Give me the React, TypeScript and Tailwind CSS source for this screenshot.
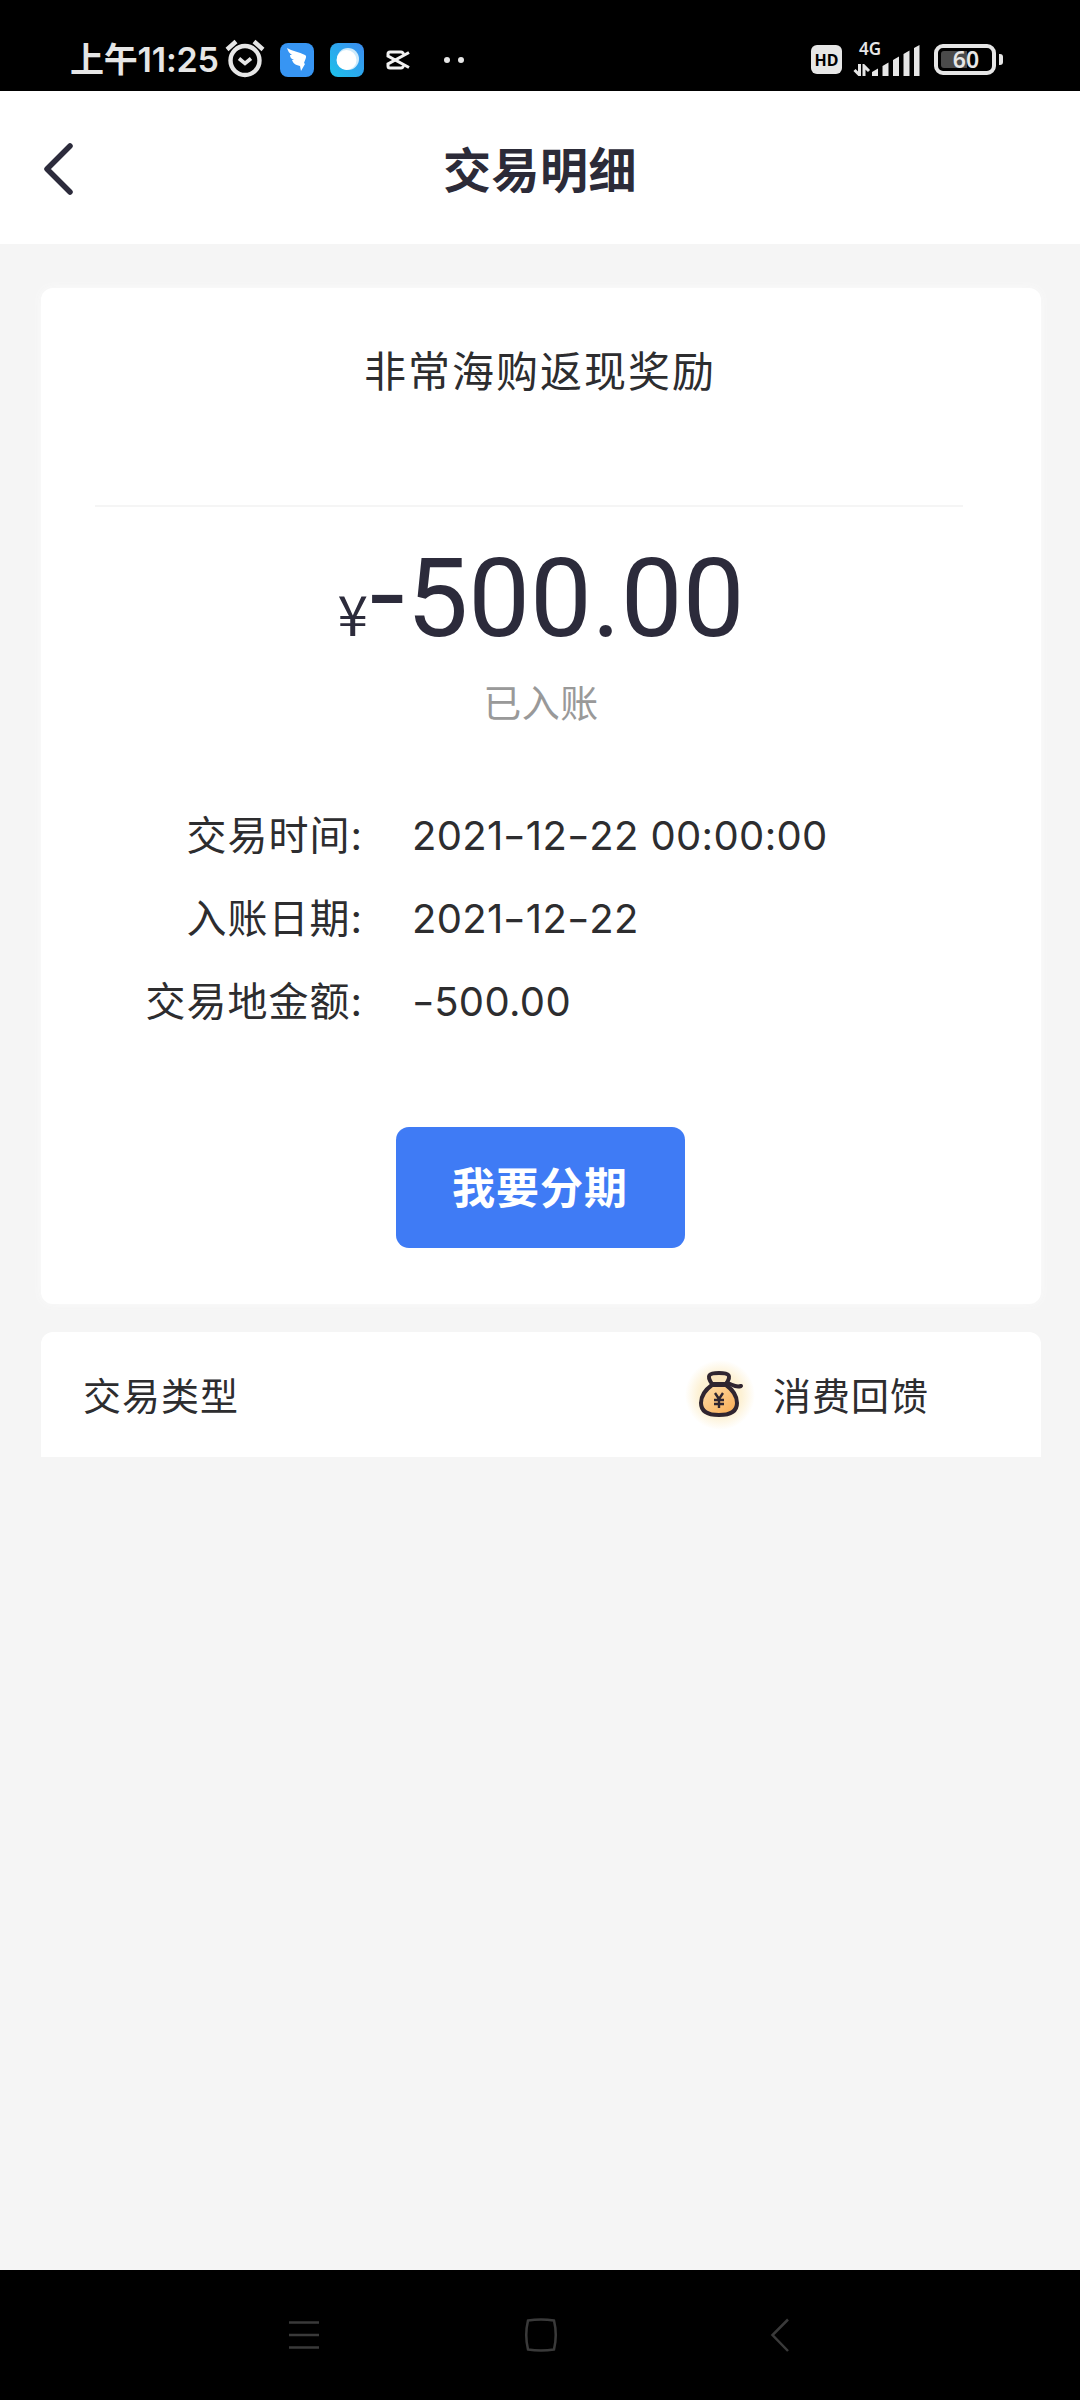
import React, { FunctionComponent } from "react";

interface Detail {
  label: string;
  value: string;
}

const details: Detail[] = [
  { label: "交易时间:", value: "2021-12-22 00:00:00" },
  { label: "入账日期:", value: "2021-12-22" },
  { label: "交易地金额:", value: "-500.00" },
];

const StatusBar: FunctionComponent = () => (
  <div className="flex h-[91px] shrink-0 items-center bg-black pl-[70px] pr-[77px] pt-[28px] text-[#e6e6e6]">
    <span className="w-[150px] whitespace-nowrap text-[34px] leading-[36px] font-semibold tracking-[-0.2px]">上午11:25</span>
    <svg className="-mt-1 ml-[5px] h-[40px] w-[40px]" viewBox="0 0 40 40" fill="none" stroke="#e6e6e6">
      <circle cx="20" cy="22.500" r="14.500" strokeWidth="4.400" />
      <path d="M14 20.500l6 5 6-5" strokeWidth="3.600" />
      <path d="M2 11.500l9-8M38 11.500l-9-8" strokeWidth="4.400" />
    </svg>
    <svg className="ml-[15px] h-[34px] w-[34px]" viewBox="0 0 34 34">
      <rect width="34" height="34" rx="8" fill="#3795f3" />
      <path d="M7 5c5 3 12 4 18 7 2 1 1 3-1 8l1 1-4 7-1-5c-5-1-7-3-8-6l2 0c-3-1-4-3-4-5l2 0C9 10 8 8 7 5z" fill="#fff" />
    </svg>
    <svg className="ml-[16px] h-[34px] w-[34px]" viewBox="0 0 34 34">
      <defs>
        <linearGradient id="bubble" x1="1" y1="0" x2="0" y2="1">
          <stop offset="0" stopColor="#3c8cf0" />
          <stop offset="1" stopColor="#1cc2ea" />
        </linearGradient>
      </defs>
      <rect width="34" height="34" rx="8" fill="url(#bubble)" />
      <circle cx="18" cy="16" r="11" fill="#cdeafb" />
      <circle cx="16.500" cy="17" r="10" fill="#fff" />
    </svg>
    <svg className="ml-[21px] h-[20px] w-[25px]" viewBox="0 0 25 20" fill="none" stroke="#f2f2f2" strokeWidth="3">
      <path d="M24 2.500L3 14v2q0 2 2 2h11q2 0 2.500-2.500" />
      <path d="M24 17.500L3 6V4q0-2 2-2h11q2 0 2.500 2.500" />
    </svg>
    <div className="ml-[34px] flex gap-2">
      <span className="h-[6px] w-[6px] rounded-full bg-[#e6e6e6]" />
      <span className="h-[6px] w-[6px] rounded-full bg-[#e6e6e6]" />
    </div>
    <div className="ml-auto flex items-center">
      <span className="flex h-[29px] w-[31px] items-center justify-center rounded-[6px] bg-[#e6e6e6] font-['Noto_Sans'] text-[16px] font-bold leading-none text-black">
        HD
      </span>
      <div className="ml-[11px] flex h-[32px] w-[68px] items-end">
        <div className="flex h-full w-[18px] flex-col">
          <span className="ml-[6px] -mt-[3px] font-['Noto_Sans'] text-[17px] leading-[16px] font-semibold">4G</span>
          <svg className="mt-auto h-[12px] w-[18px]" viewBox="0 0 18 12" fill="none" stroke="#e6e6e6" strokeWidth="3">
            <path d="M6.500 0v11L1.500 6M11 12V2l5 5" />
          </svg>
        </div>
        <svg className="ml-[1px] h-[31px] w-[48px]" viewBox="0 0 48 31" fill="#e6e6e6">
          <path d="M0 31v-4l6-3.500V31zM10.500 31V21l6-3.500V31zM21 31V15l6-3.500V31zM31.500 31V9l6-3.500V31zM42 31V3l5.500-3v31z" />
        </svg>
      </div>
      <div className="ml-[13px] flex h-[31px] w-[62px] rounded-[9px] border-[4px] border-[#e6e6e6] p-[3px]">
        <div className="relative flex flex-1 items-center justify-center">
          <div className="absolute left-0 top-0 h-full w-[26px] rounded-l-[3px] bg-[#4a4a4a]" />
          <span className="relative ml-[2px] font-['Noto_Sans'] text-[23px] font-semibold leading-none">60</span>
        </div>
      </div>
      <span className="ml-[3px] h-[11px] w-[4px] rounded-r-[3px] bg-[#e6e6e6]" />
    </div>
  </div>
);

const MoneyBag: FunctionComponent = () => (
  <svg className="h-[72px] w-[72px]" viewBox="0 0 72 72" fill="none">
    <defs>
      <radialGradient id="halo">
        <stop offset="0.600" stopColor="#fdf1d4" />
        <stop offset="1" stopColor="#fdf1d4" stopOpacity="0" />
      </radialGradient>
      <linearGradient id="bag" x1="0" y1="0" x2="1" y2="1">
        <stop offset="0" stopColor="#ffe0b0" />
        <stop offset="1" stopColor="#f9a94e" />
      </linearGradient>
    </defs>
    <circle cx="35" cy="36" r="35" fill="url(#halo)" />
    <g stroke="#302530" strokeWidth="4" strokeLinejoin="round" strokeLinecap="round">
      <path d="M27 26C20 31 16 38 16 44c0 9 7 12 18 12s18-3 18-12c0-6-4-13-11-18z" fill="url(#bag)" />
      <path d="M27 25c-6-9-3-11 7-11s13 2 7 11z" fill="#fbe5bd" />
      <path d="M42 24c5 1 8 5 14 3" />
    </g>
    <path d="M30 34l4 6 4-6M29 41h10M29 45h10M34 40v9" stroke="#302530" strokeWidth="2.400" />
  </svg>
);

// The dashes of dates and amounts are drawn wider than the font's own hyphen
const DashedText: FunctionComponent<{ text: string }> = ({ text }) => (
  <>
    {text.split("-").map((part, index) => (
      <React.Fragment key={index}>
        {index > 0 && <span className="mx-[1.7px] inline-block scale-x-125">-</span>}
        {part}
      </React.Fragment>
    ))}
  </>
);

const NavBar: FunctionComponent = () => (
  <div className="flex h-[130px] shrink-0 items-center justify-between bg-black pl-[286px] pr-[284px]">
    <svg className="h-[36px] w-[36px]" viewBox="0 0 36 36" stroke="#3a3a3a" strokeWidth="2.500">
      <path d="M3 5.500h30M3 18h30M3 30.500h30" />
    </svg>
    <svg className="h-[36px] w-[36px]" viewBox="0 0 36 36" fill="none" stroke="#3a3a3a" strokeWidth="2.500">
      <path d="M5 3.500Q18 1.500 31 3.500q3.500 14.500 0 29Q18 34.500 5 32.500q-3.500-14.500 0-29z" />
    </svg>
    <svg className="h-[36px] w-[36px]" viewBox="0 0 36 36" fill="none" stroke="#3a3a3a" strokeWidth="2.500">
      <path d="M28 2.500L12.500 18 28 34" />
    </svg>
  </div>
);

const App: FunctionComponent = () => {
  return (
    <div className="flex h-[2400px] w-[1080px] flex-col bg-[#f5f5f5] font-[Inter,'Noto_Sans_CJK_SC',sans-serif] text-[#2d2d2f]">
      <StatusBar />

      <header className="grid h-[153px] grid-cols-[1fr_auto_1fr] items-center bg-white px-[42px] pt-[3px]">
        <button className="justify-self-start">
          <svg className="h-[54px] w-[34px]" viewBox="0 0 34 54" fill="none" stroke="#2c2b3c" strokeWidth="5.500" strokeLinecap="round" strokeLinejoin="round">
            <path d="M28 4L5 27l23 23" />
          </svg>
        </button>
        <h1 className="pt-[3px] text-[48px] font-bold leading-none tracking-[0.5px] text-[#2c2b38]">交易明细</h1>
      </header>

      <main className="flex flex-1 flex-col gap-[28px] pl-[41px] pr-[39px] pt-[44px]">
        <section className="flex h-[1016px] flex-col items-center rounded-[12px] bg-white shadow-[0_0_10px_#fafafa]">
          <h2 className="mr-[2px] mt-[62px] text-[42px] leading-[44px] tracking-[2px]">非常海购返现奖励</h2>
          <div className="mr-[24px] mt-[111px] h-[2px] w-[868px] bg-[#f5f5f5]" />

          <div className="mt-[37px] flex h-[110px] items-baseline text-[#2c2b3b]">
            <span className="mr-[2px] font-['Noto_Sans_CJK_SC'] text-[55px] leading-[110px]">¥</span>
            <span className="font-[Roboto] text-[110px] leading-[110px]">
              <span className="mr-[4px] ml-[2px] inline-block -translate-y-[4px] scale-x-115">-</span>500.00
            </span>
          </div>
          <p className="mt-[27px] text-[38px] leading-[44px] tracking-[0.500px] text-[#999999]">已入账</p>

          <dl className="mt-[69px] grid w-full grid-cols-[322px_1fr] gap-x-[49px] text-[40px] leading-[83px]">
            {details.map((item) => (
              <React.Fragment key={item.label}>
                <dt className="whitespace-nowrap text-right tracking-[1px]">{item.label}</dt>
                <dd className="tracking-[0.35px]">
                  <DashedText text={item.value} />
                </dd>
              </React.Fragment>
            ))}
          </dl>

          <button className="mr-[2px] mt-[84px] h-[121px] w-[289px] rounded-[13px] bg-[#3f7bf5] pt-[1px] text-[43px] font-bold tracking-[1px] text-white">
            我要分期
          </button>
        </section>

        <section className="flex h-[125px] items-center rounded-t-[12px] bg-white pl-[42px] pr-[112px] text-[38px] tracking-[1px]">
          <span className="pt-[4px]">交易类型</span>
          <div className="ml-auto flex items-center gap-[16px]">
            <MoneyBag />
            <span className="pt-[4px]">消费回馈</span>
          </div>
        </section>
      </main>

      <NavBar />
    </div>
  );
};

export default App;
